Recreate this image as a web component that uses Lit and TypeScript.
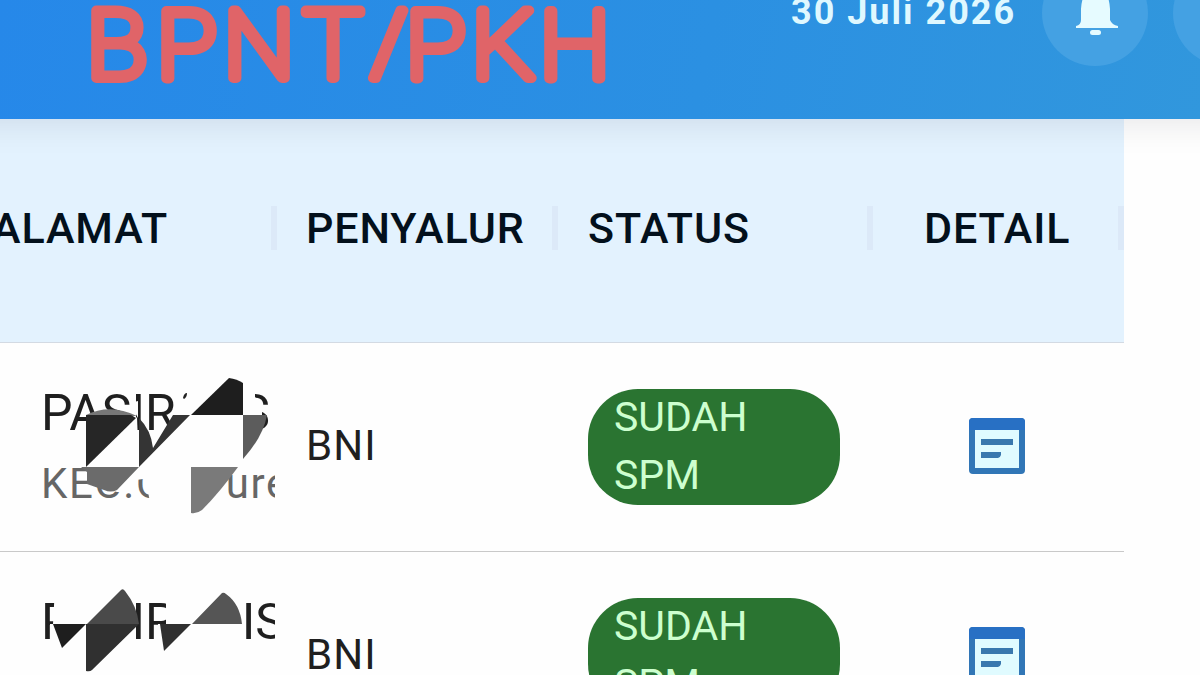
import { LitElement, html, css, svg } from 'lit';
import { customElement, property } from 'lit/decorators.js';

interface Recipient {
    village: string;
    villageEnd: string;
    district: string;
    bank: string;
    status: string;
}

const recipients: Recipient[] = [
    { village: 'PASIR', villageEnd: 'S', district: 'KEC.Cibeureum', bank: 'BNI', status: 'SUDAH SPM' },
    { village: 'PASIR', villageEnd: 'IS', district: 'KEC.Cibeureum', bank: 'BNI', status: 'SUDAH SPM' },
];

// Scribbles that hide parts of the address, in the coordinates of the address cell
const scribbles = [
    svg`
        <g fill="#fefefe">
            <path d="M137 74L139 124H86Z" />
            <path d="M130 60L138 58V75Z" />
            <path d="M139 124L191 72L178 62V36H255V54L262 62V72H257V124Z" />
            <path d="M86 124H238L226 137V160H152Q146 154 150 135L136 137L130 149L117 149L88 141Z" />
        </g>
        <path fill="#222" d="M183 55Q184 50 187 50Q187 54 184 56Z" />
        <path fill="#777" d="M86 72Q110 60 137 73L130 73Z" />
        <path fill="#262626" d="M86 72H131L136 75L86 124Z" />
        <path fill="#343434" d="M139 75Q151 87 153 105L173 72H190L139 124Z" />
        <path fill="#6b6b6b" d="M81 124H139L117 147Q111 150 104 147L87 141V129Z" />
        <path fill="#1e1e1e" d="M191 72L229 35Q237 36 243 40V72Z" />
        <path fill="#5c5c5c" d="M243 72H267Q263 94 243 116Z" />
        <path fill="#7a7a7a" d="M191 124H238Q220 149 202 167Q197 171 191 170Z" />
    `,
    svg`
        <g fill="#fefefe">
            <path d="M55 35H136V124H50V72H53Z" />
            <path d="M166 35H243V124H158V72H166Z" />
        </g>
        <path fill="#1e1e1e" d="M53 72H86L62 96Z" />
        <path fill="#4a4a4a" d="M87 72L121 38Q123 36 125 39Q137 54 139 72Z" />
        <path fill="#303030" d="M86 72H139L92 118Q90 120 86 119Z" />
        <path fill="#303030" d="M160 72H191L164 99Z" />
        <path fill="#555" d="M192 72L222 41Q224 40 226 42Q240 52 242 72Z" />
    `,
];

/**
 * Pill that shows the payment status of a recipient.
 */
@customElement('status-chip')
export class StatusChip extends LitElement {
    static override styles = css`
        :host {
            display: block;
        }

        .chip {
            box-sizing: border-box;
            width: 252px;
            height: 116px;
            padding: 0 90px 0 26px;
            border-radius: 50px;
            background: #2a7431;
            color: #cdffcf;
            font-size: 41px;
            line-height: 57.6px;
        }
    `;

    @property() label = '';

    override render() {
        return html`<div class="chip">${this.label}</div>`;
    }
}

@customElement('app-root')
export class AppRoot extends LitElement {
    static override styles = css`
        :host {
            display: block;
            height: 675px;
            overflow: hidden;
            background: #fefefe;
            font-family: Roboto, "Liberation Sans", sans-serif;
            color: #1f1f1f;
        }

        .toolbar {
            position: relative;
            box-sizing: border-box;
            display: flex;
            align-items: flex-start;
            width: 1280px;
            height: 119px;
            background: linear-gradient(100deg, #2688e9, #2b90e2 55%, #3298dc);
            box-shadow: -40px 2px 34px rgba(0, 0, 40, .11);
        }

        .title {
            display: block;
            flex: none;
            width: 791px;
            height: 119px;
        }

        .title text {
            font-family: Roboto, sans-serif;
            font-size: 95px;
            font-weight: 100;
            fill: #e06468;
            stroke: #e06468;
            stroke-width: 10px;
            stroke-linejoin: round;
        }

        .title .slash {
            font-size: 88px;
        }

        .date {
            flex: none;
            width: 252px;
            margin-top: -9px;
            color: #dff8ff;
            font-size: 36px;
            font-weight: 700;
            line-height: 42px;
            letter-spacing: 2px;
            white-space: nowrap;
        }

        .round {
            flex: none;
            display: flex;
            justify-content: center;
            width: 106px;
            height: 106px;
            margin: -40px 26px 0 -1px;
            border-radius: 50%;
            background: #44a1e3;
        }

        .bell {
            width: 42px;
            height: 76px;
            margin-left: 3px;
        }

        .grid {
            display: grid;
            grid-template-columns: 275px 281px 315px 253px;
            width: 1124px;
        }

        .head {
            box-sizing: border-box;
            height: 224px;
            border-bottom: 1px solid #d3dae3;
            background: #e3f2fe;
            color: #03101c;
            font-size: 43px;
            font-weight: 500;
            letter-spacing: .9px;
        }

        .head-cell {
            display: flex;
            align-items: center;
            justify-content: space-between;
            height: 218px;
            padding-left: 31px;
        }

        .head-cell:first-child {
            padding-left: 0;
        }

        .head-cell:first-child .head-label {
            margin-left: -8px;
        }

        .head-cell:nth-child(3) {
            padding-left: 32px;
        }

        .head-cell:last-child {
            padding-left: 53px;
        }

        .separator {
            width: 6px;
            height: 44px;
            margin-right: -2px;
            background: #dce9f8;
        }

        .head-cell:last-child .separator {
            margin-right: 0;
        }

        .row {
            box-sizing: border-box;
            height: 209px;
            border-bottom: 1px solid #c9c9c9;
            font-size: 42px;
        }

        .cell {
            display: flex;
            align-items: center;
            height: 208px;
            padding-left: 32px;
        }

        .cell--bank {
            height: 205px;
            padding-left: 31px;
            letter-spacing: 1px;
        }

        .cell--detail {
            justify-content: center;
            height: 206px;
            padding: 0 2px 0 0;
        }

        .address {
            position: relative;
            height: 208px;
            padding: 42px 0 0 41px;
            box-sizing: border-box;
            overflow: hidden;
            white-space: nowrap;
        }

        .village {
            display: flex;
            justify-content: space-between;
            width: 244px;
            height: 70px;
            font-size: 50px;
            line-height: 57px;
        }

        .village--short {
            width: 229px;
        }

        .district {
            color: #666;
            line-height: 57px;
            letter-spacing: 1.6px;
        }

        .scribble {
            position: absolute;
            inset: 0;
        }

        .detail-icon {
            width: 56px;
            height: 56px;
        }
    `;

    renderHead(label: string) {
        return html`
            <div class="head-cell">
                <span class="head-label">${label}</span>
                <span class="separator"></span>
            </div>
        `;
    }

    renderRow(item: Recipient, index: number) {
        return html`
            <div class="grid row">
                <div class="address">
                    <div class="village ${item.villageEnd.length === 1 ? 'village--short' : ''}">
                        <span>${item.village}</span><span>${item.villageEnd}</span>
                    </div>
                    <div class="district">${item.district}</div>
                    <svg class="scribble" width="275" height="208" aria-hidden="true">${scribbles[index]}</svg>
                </div>
                <div class="cell cell--bank">${item.bank}</div>
                <div class="cell"><status-chip .label=${item.status}></status-chip></div>
                <div class="cell cell--detail">
                    <svg class="detail-icon" viewBox="0 0 56 56">
                        <rect width="56" height="56" rx="4" fill="#3176b6" />
                        <path d="M4 0H52Q56 0 56 4V12H0V4Q0 0 4 0Z" fill="#2870c4" />
                        <path d="M6 12H50V50H6Z" fill="#e0fbff" />
                        <path d="M12 21H44V27H12ZM12 34H32V37Q31 40 29 40H12Z" fill="#3978ae" />
                    </svg>
                </div>
            </div>
        `;
    }

    override render() {
        return html`
            <header class="toolbar">
                <svg class="title" viewBox="0 0 791 119">
                    <text transform="scale(1.05 1)" y="77.5" x="82.7 149.3 213 288.7">BPNT<tspan class="slash" x="353.5" y="73">/</tspan><tspan x="386.5 449.3 514" y="77.5">PKH</tspan></text>
                </svg>
                <span class="date">30 Juli 2026</span>
                <span class="round">
                    <svg class="bell" viewBox="0 0 42 76">
                        <path d="M5 60V49Q6 31 17 28V25Q17 22 20 22Q23 22 23 25V28Q33 31 34 49V60Q36 65 42 66V68H0V66Q5 65 5 60Z" fill="#e6fbff" />
                        <rect x="14" y="70" width="11" height="5" rx="2.5" fill="#e6fbff" />
                    </svg>
                </span>
                <span class="round"></span>
            </header>
            <div class="grid head">
                ${['ALAMAT', 'PENYALUR', 'STATUS', 'DETAIL'].map(label => this.renderHead(label))}
            </div>
            ${recipients.map((item, index) => this.renderRow(item, index))}
        `;
    }
}

declare global {
    interface HTMLElementTagNameMap {
        'status-chip': StatusChip;
        'app-root': AppRoot;
    }
}
